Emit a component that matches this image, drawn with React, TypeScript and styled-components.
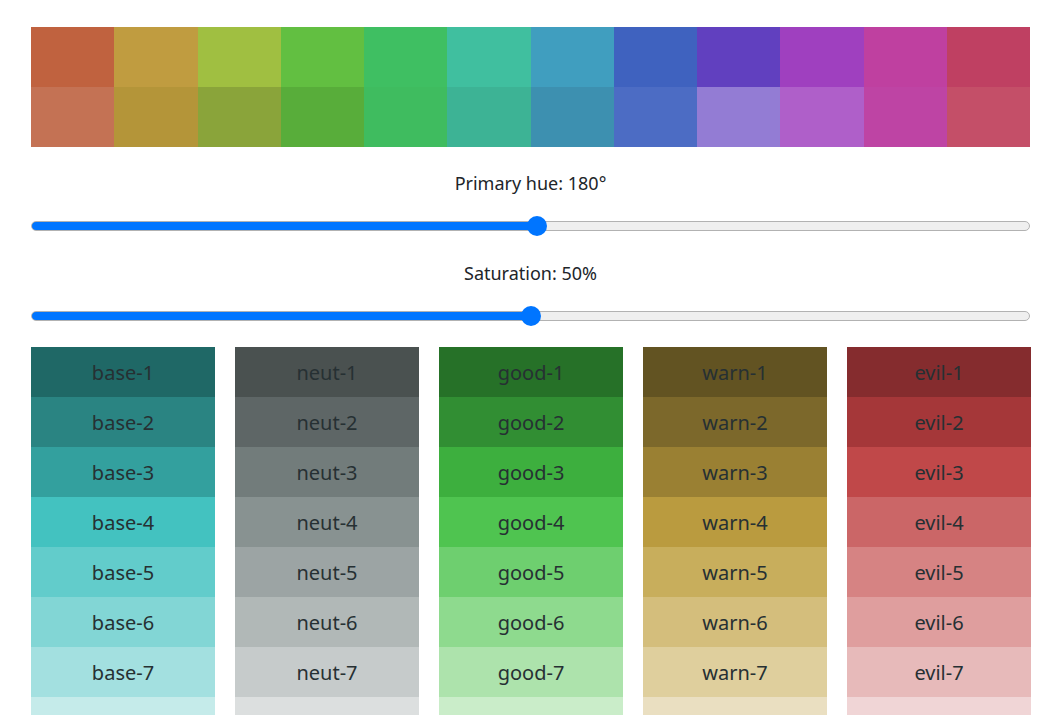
import React, { useState } from 'react';
import styled, { createGlobalStyle } from 'styled-components';

const GlobalStyle = createGlobalStyle`
  html, body {
    margin: 0;
    padding: 0;
    background: #fff;
    overflow: hidden;
  }
  body {
    font-family: "Segoe UI", "Noto Sans", "Open Sans", sans-serif;
    color: #212529;
  }
`;

const Page = styled.div`
  padding: 27px 31px 0 31px;
  display: flex;
  flex-direction: column;
`;

const HueStrip = styled.div`
  display: grid;
  grid-template-columns: repeat(12, 1fr);
  grid-template-rows: 60px 60px;
  width: 999px;
`;

const HueCell = styled.div<{ $color: string }>`
  background: ${p => p.$color};
`;

const Control = styled.div<{ $top: number }>`
  display: flex;
  flex-direction: column;
  align-items: stretch;
  margin-top: ${p => p.$top}px;
  gap: 21px;
`;

const Label = styled.div`
  text-align: center;
  font-size: 18px;
  line-height: 24px;
  width: 999px;
`;

const Range = styled.input`
  -webkit-appearance: none;
  appearance: none;
  margin: 0;
  width: 999px;
  height: 20px;
  background: transparent;

  &::-webkit-slider-runnable-track {
    box-sizing: border-box;
    height: 10px;
    border-radius: 5px;
    border: 1px solid #b2b2b2;
    background: linear-gradient(
      to right,
      #0075ff 0,
      #0075ff var(--pct),
      #efefef var(--pct),
      #efefef 100%
    );
  }

  &::-webkit-slider-thumb {
    -webkit-appearance: none;
    appearance: none;
    width: 20px;
    height: 20px;
    margin-top: -6px;
    border-radius: 50%;
    background: #0075ff;
    border: none;
  }
`;

const Palette = styled.div`
  display: grid;
  grid-template-columns: repeat(5, 184px);
  column-gap: 20px;
  margin-top: 21px;
`;

const Column = styled.div`
  display: flex;
  flex-direction: column;
`;

const Swatch = styled.div<{ $color: string }>`
  height: 50px;
  display: flex;
  align-items: center;
  justify-content: center;
  background: ${p => p.$color};
  font-size: 20px;
  color: #263033;
`;

const topRow = [
  '#c0623f', '#c09c40', '#a0bf41', '#62bf41', '#3fbf62', '#40bf9f',
  '#409ebf', '#3f62bf', '#6140bf', '#9f40bf', '#bf40a0', '#bf4062',
];

const bottomRow = [
  '#c47254', '#b49539', '#8aa43a', '#58ad3a', '#3fbc5f', '#3db395',
  '#3d90b0', '#4c6cc4', '#937cd4', '#af5fc9', '#be44a4', '#c44f68',
];

const groups: { name: string; colors: string[] }[] = [
  { name: 'base', colors: ['#1f6866', '#2a8482', '#33a09e', '#43c2c0', '#62cccb', '#82d6d5', '#a3e0e0', '#c5ebea'] },
  { name: 'neut', colors: ['#4a5150', '#5e6666', '#727c7b', '#889291', '#9ca4a4', '#b1b8b7', '#c6cbcb', '#dcdfdf'] },
  { name: 'good', colors: ['#267128', '#318e33', '#3daf3e', '#4fc450', '#6ecf6f', '#8eda8e', '#ade3ac', '#caedc9'] },
  { name: 'warn', colors: ['#625322', '#7c682b', '#9a8033', '#ba9b3f', '#c8ae5c', '#d4be7c', '#dfcf9d', '#eadfc1'] },
  { name: 'evil', colors: ['#852c2e', '#a53739', '#c04849', '#cb6667', '#d68383', '#df9e9e', '#e7baba', '#f0d5d6'] },
];

const Slider: React.FC<{ value: number; min: number; max: number; onChange: (v: number) => void }> = ({ value, min, max, onChange }) => {
  // fill stops at the thumb centre: 10px thumb radius, track 999px
  const frac = (value - min) / (max - min);
  const px = 10 + frac * (999 - 20);
  return (
    <Range
      type="range"
      min={min}
      max={max}
      value={value}
      onChange={e => onChange(Number(e.target.value))}
      style={{ ['--pct' as string]: `${px}px` } as React.CSSProperties}
    />
  );
};

const App: React.FC = () => {
  const [hue, setHue] = useState(180);
  const [sat, setSat] = useState(50);

  return (
    <Page>
      <GlobalStyle />
      <HueStrip>
        {topRow.map((c, i) => <HueCell key={'t' + i} $color={c} />)}
        {bottomRow.map((c, i) => <HueCell key={'b' + i} $color={c} />)}
      </HueStrip>

      <Control $top={24}>
        <Label>Primary hue: {hue}°</Label>
        <Slider value={hue} min={0} max={355} onChange={setHue} />
      </Control>

      <Control $top={25}>
        <Label>Saturation: {sat}%</Label>
        <Slider value={sat} min={0} max={100} onChange={setSat} />
      </Control>

      <Palette>
        {groups.map(g => (
          <Column key={g.name}>
            {g.colors.map((c, i) => (
              <Swatch key={i} $color={c}>
                {i < 7 ? `${g.name}-${i + 1}` : ''}
              </Swatch>
            ))}
          </Column>
        ))}
      </Palette>
    </Page>
  );
};

export default App;
